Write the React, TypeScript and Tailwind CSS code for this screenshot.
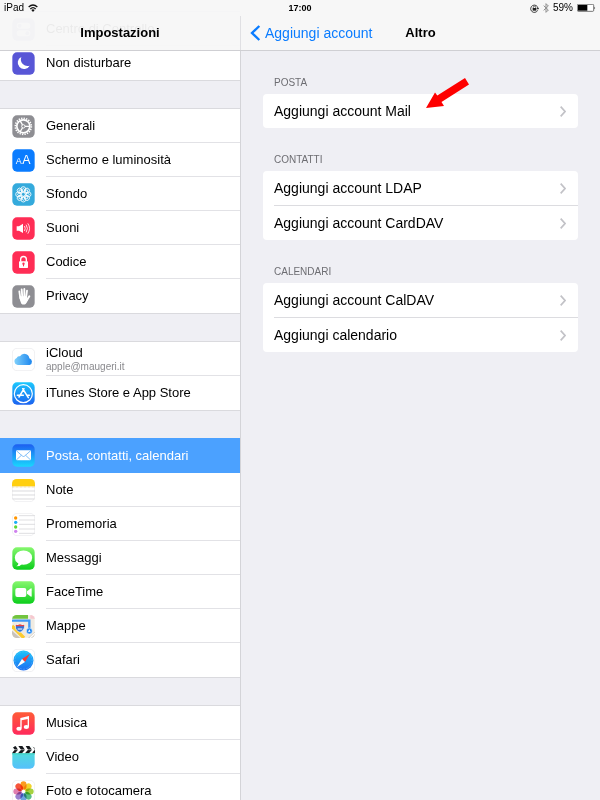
import React from 'react'

interface SettingsItem {
  label: string
  detail?: string
  selected?: boolean
  icon: React.ReactNode
}

interface TileProps {
  fill: string
  outlined?: boolean
  children?: React.ReactNode
}

const Tile: React.FC<TileProps> = ({ fill, outlined, children }) => {
  return (
    <svg viewBox="0 0 69 69" className="size-[23px] shrink-0" aria-hidden="true">
      <rect x="1" y="1" width="67" height="67" rx="14" fill={fill} stroke={outlined ? '#e9e9ec' : 'none'} strokeWidth="2" />
      {children}
    </svg>
  )
}

const Gradients: React.FC = () => {
  const stops = [
    ['g-cloud', '#7fd0fb', '#1c86ee'],
    ['g-store', '#1bc8fd', '#1b62f0'],
    ['g-mail', '#1d5ff0', '#1ad6fd'],
    ['g-green', '#86f76e', '#0cce1c'],
    ['g-safari', '#1bc6fb', '#1c6cf1'],
    ['g-music', '#ff5b37', '#ff2a5c'],
    ['g-video', '#4fe6cf', '#55c0fb'],
  ]
  return (
    <svg width="0" height="0" className="absolute" aria-hidden="true">
      <defs>
        {stops.map(([id, from, to]) =>
          <linearGradient key={id} id={id} x1="0" y1="0" x2={id === 'g-cloud' ? '1' : '0'} y2={id === 'g-cloud' ? '0' : '1'}>
            <stop offset="0" stopColor={from} />
            <stop offset="1" stopColor={to} />
          </linearGradient>
        )}
        <clipPath id="tile-clip">
          <rect x="0" y="0" width="69" height="69" rx="14" />
        </clipPath>
      </defs>
    </svg>
  )
}

const ControlCenterIcon = () => (
  <Tile fill="#a9a9d8">
    <rect x="14" y="14" width="41" height="18" rx="9" fill="#fff" />
    <circle cx="23" cy="23" r="6" fill="#a9a9d8" />
    <rect x="14" y="37" width="41" height="18" rx="9" fill="#fff" />
    <circle cx="46" cy="46" r="6" fill="#a9a9d8" />
  </Tile>
)

const MoonIcon = () => (
  <Tile fill="#5856d6">
    <path d="M28 15A19 19 0 1 0 53 41A20 20 0 0 1 28 15Z" fill="#fff" />
  </Tile>
)

const GearIcon = () => (
  <Tile fill="#8e8e93">
    <g fill="none" stroke="#fff">
      <circle cx="34" cy="34" r="24" strokeWidth="5" strokeDasharray="4 3.54" />
      <circle cx="34" cy="34" r="19.5" strokeWidth="5" />
      <circle cx="34" cy="34" r="5" strokeWidth="3" />
      <path d="M39 34H53M31.500 29.700L24 17M31.500 38.300L24 51" strokeWidth="4" />
    </g>
  </Tile>
)

const DisplayIcon = () => (
  <Tile fill="#0a7cff">
    <g fill="#fff" fontFamily="Liberation Sans, sans-serif">
      <text x="11" y="46" fontSize="27">A</text>
      <text x="31" y="46" fontSize="37">A</text>
    </g>
  </Tile>
)

const WallpaperIcon = () => (
  <Tile fill="#34aadc">
    <g fill="none" stroke="#fff" strokeWidth="2.500">
      {[0, 45, 90, 135, 180, 225, 270, 315].map(angle =>
        <g key={angle} transform={`rotate(${angle} 34 34)`}>
          <circle cx="34" cy="18" r="7" />
          <path d="M34 28C29 24 29 19 34 16C39 19 39 24 34 28" />
        </g>
      )}
      <circle cx="34" cy="34" r="6" />
    </g>
  </Tile>
)

const SoundsIcon = () => (
  <Tile fill="#ff2d55">
    <path d="M14 28H21L33 20V48L21 41H14Z" fill="#fff" />
    <g fill="none" stroke="#fff" strokeWidth="2.500" strokeLinecap="round">
      <path d="M38 28Q42 34 38 41" />
      <path d="M43 24Q50 34 43 45" />
      <path d="M48 20Q58 34 48 49" />
    </g>
  </Tile>
)

const LockIcon = () => (
  <Tile fill="#ff2d55">
    <rect x="21" y="31" width="27" height="20" rx="2" fill="#fff" />
    <path d="M26 32V25a8.500 8.500 0 0 1 17 0V32" fill="none" stroke="#fff" strokeWidth="4" />
    <circle cx="34.500" cy="38" r="3.500" fill="#ff2d55" />
    <path d="M34.500 39V46" stroke="#ff2d55" strokeWidth="3" />
  </Tile>
)

const HandIcon = () => (
  <Tile fill="#8e8e93">
    <g stroke="#fff" strokeLinecap="round" strokeWidth="5.500">
      <path d="M22 19L25 40M29 13L31 38M37 12V38M45 17L42 40" />
      <path d="M52 34L45 45" strokeWidth="6" />
    </g>
    <path d="M22 34H44V42L50 39Q46 52 41 57Q34 61 28 56Q23 48 22 34Z" fill="#fff" />
  </Tile>
)

const CloudIcon = () => (
  <Tile fill="#fff" outlined>
    <path d="M17 51A11 11 0 0 1 14 30A8 8 0 0 1 24 25A15 15 0 0 1 52 31A10.500 10.500 0 0 1 53 51Z" fill="url(#g-cloud)" />
  </Tile>
)

const AppStoreIcon = () => (
  <Tile fill="url(#g-store)">
    <g fill="none" stroke="#fff" strokeLinecap="round">
      <circle cx="34" cy="35" r="27" strokeWidth="3.500" />
      <path d="M36 20L21 45M32 20L49 47M16 40H34M44 40H52" strokeWidth="4.500" />
    </g>
  </Tile>
)

const MailIcon = () => (
  <Tile fill="url(#g-mail)">
    <rect x="12" y="19" width="45" height="30" rx="3" fill="#fff" />
    <path d="M13 20L31 36Q34.500 39 38 36L56 20M13 48L28 34M56 48L41 34" fill="none" stroke="#3f9df5" strokeWidth="2" />
  </Tile>
)

const NotesIcon = () => (
  <Tile fill="#fff" outlined>
    <g clipPath="url(#tile-clip)">
      <rect width="69" height="22" fill="#ffcf10" />
      <path d="M0 24H69" stroke="#d9b75a" strokeWidth="2" strokeDasharray="2 2" />
      <path d="M0 36H69M0 48H69M0 60H69" stroke="#d3d3d6" strokeWidth="2.500" />
    </g>
  </Tile>
)

const RemindersIcon = () => (
  <Tile fill="#fff" outlined>
    <path d="M21 8H69M21 21H69M21 34H69M21 48H69M21 61H69" stroke="#d8d8db" strokeWidth="2.500" />
    <circle cx="11" cy="15" r="5" fill="#ff9500" />
    <circle cx="11" cy="28" r="5" fill="#1badf8" />
    <circle cx="11" cy="42" r="5" fill="#5fd836" />
    <circle cx="11" cy="55" r="5" fill="#cf82ee" />
  </Tile>
)

const MessagesIcon = () => (
  <Tile fill="url(#g-green)">
    <ellipse cx="34.500" cy="32" rx="26" ry="21.500" fill="#fff" />
    <path d="M20 45Q20 54 13 58Q25 58 31 50Z" fill="#fff" />
  </Tile>
)

const FaceTimeIcon = () => (
  <Tile fill="url(#g-green)">
    <rect x="10" y="21" width="33" height="27" rx="6" fill="#fff" />
    <path d="M45 31L57 22Q59 21 59 24V45Q59 48 57 47L45 38Z" fill="#fff" />
  </Tile>
)

const MapsIcon = () => (
  <Tile fill="#f0ebe2">
    <g clipPath="url(#tile-clip)">
      <path d="M0 0H48V11H0Z" fill="#72c43f" />
      <path d="M55 0H69V11H55Z" fill="#f6c8cf" />
      <path d="M0 47L25 69H0Z" fill="#c9c3ba" />
      <path d="M48 69L69 50V69Z" fill="#cfc9c0" />
      <path d="M0 33L36 69" stroke="#fccb2f" strokeWidth="10" />
      <path d="M69 55L54 69" stroke="#fff" strokeWidth="4" />
      <path d="M0 17H52V46" fill="none" stroke="#3d98f7" strokeWidth="7" />
      <path d="M12 29Q18 32 24 28Q30 32 36 29L38 36Q36 48 24 52Q11 48 10 36Z" fill="#3374d8" stroke="#fff" strokeWidth="2" />
      <path d="M12 29Q18 32 24 28Q30 32 36 29L37 34H11Z" fill="#e8413f" />
      <path d="M17 42H31" stroke="#fff" strokeWidth="3" />
      <circle cx="52" cy="48" r="9" fill="#2489f3" stroke="#fff" strokeWidth="1.500" />
      <path d="M52 43L56 52L52 50L48 52Z" fill="#fff" />
    </g>
  </Tile>
)

const SafariIcon = () => (
  <Tile fill="#fff" outlined>
    <circle cx="34.500" cy="34.500" r="30" fill="url(#g-safari)" />
    <circle cx="34.500" cy="34.500" r="26" fill="none" stroke="#6fc0f8" strokeWidth="3" strokeDasharray="1.500 3" />
    <path d="M54 14L30 30L39 39Z" fill="#fb3b33" />
    <path d="M15 54L30 30L39 39Z" fill="#fff" />
  </Tile>
)

const MusicIcon = () => (
  <Tile fill="url(#g-music)">
    <path d="M25 18L51 12V20L29 25V49H25Z" fill="#fff" />
    <path d="M47 14H51V44H47Z" fill="#fff" />
    <ellipse cx="21" cy="50" rx="8" ry="6" fill="#fff" />
    <ellipse cx="43" cy="45" rx="8" ry="6" fill="#fff" />
  </Tile>
)

const VideoIcon = () => (
  <Tile fill="url(#g-video)">
    <g clipPath="url(#tile-clip)">
      <rect width="69" height="22" fill="#fff" />
      <path d="M0 0H11L18 11L9 22H0L8 11ZM19 0H31L39 11L30 22H18L27 11ZM41 0H52L60 11L51 22H39L48 11ZM62 0H69V22H60L68 11Z" fill="#15181c" />
      <path d="M0 11H69" stroke="#fff" strokeWidth="1.500" />
      <rect y="22" width="69" height="3" fill="#3acfbc" />
    </g>
  </Tile>
)

const petals = ['#fb9a1e', '#f2d32c', '#a5d13f', '#58bf88', '#6aa3e0', '#9a80cf', '#e07fb0', '#f6553a']

const PhotosIcon = () => (
  <Tile fill="#fff" outlined>
    {petals.map((color, index) =>
      <rect key={color} x="25.500" y="4" width="18" height="25" rx="9" fill={color} className="mix-blend-multiply" transform={`rotate(${index * 45} 34.500 34.500)`} />
    )}
  </Tile>
)

const groups: SettingsItem[][] = [
  [
    { label: 'Centro di Controllo', icon: <ControlCenterIcon /> },
    { label: 'Non disturbare', icon: <MoonIcon /> },
  ],
  [
    { label: 'Generali', icon: <GearIcon /> },
    { label: 'Schermo e luminosità', icon: <DisplayIcon /> },
    { label: 'Sfondo', icon: <WallpaperIcon /> },
    { label: 'Suoni', icon: <SoundsIcon /> },
    { label: 'Codice', icon: <LockIcon /> },
    { label: 'Privacy', icon: <HandIcon /> },
  ],
  [
    { label: 'iCloud', detail: 'apple@maugeri.it', icon: <CloudIcon /> },
    { label: 'iTunes Store e App Store', icon: <AppStoreIcon /> },
  ],
  [
    { label: 'Posta, contatti, calendari', selected: true, icon: <MailIcon /> },
    { label: 'Note', icon: <NotesIcon /> },
    { label: 'Promemoria', icon: <RemindersIcon /> },
    { label: 'Messaggi', icon: <MessagesIcon /> },
    { label: 'FaceTime', icon: <FaceTimeIcon /> },
    { label: 'Mappe', icon: <MapsIcon /> },
    { label: 'Safari', icon: <SafariIcon /> },
  ],
  [
    { label: 'Musica', icon: <MusicIcon /> },
    { label: 'Video', icon: <VideoIcon /> },
    { label: 'Foto e fotocamera', icon: <PhotosIcon /> },
  ],
]

const sections = [
  { title: 'POSTA', items: ['Aggiungi account Mail'] },
  { title: 'CONTATTI', items: ['Aggiungi account LDAP', 'Aggiungi account CardDAV'] },
  { title: 'CALENDARI', items: ['Aggiungi account CalDAV', 'Aggiungi calendario'] },
]

const StatusBar: React.FC = () => {
  return (
    <div className="grid h-4 grid-cols-3 items-center px-1 text-[10px] leading-4">
      <div className="flex items-center gap-1">
        <span>iPad</span>
        <svg viewBox="0 0 30 24" className="h-2 w-[10px]" aria-hidden="true">
          <g fill="none" stroke="#111" strokeWidth="4">
            <path d="M2 9Q15 -3 28 9" />
            <path d="M7 15Q15 7 23 15" />
          </g>
          <path d="M10 18Q15 14 20 18L15 24Z" fill="#111" />
        </svg>
      </div>
      <time className="text-center text-[9px] font-bold">17:00</time>
      <div className="flex items-center justify-end gap-1">
        <svg viewBox="0 0 27 27" className="size-[9px]" aria-hidden="true">
          <path d="M23 19A11 11 0 1 1 24 13" fill="none" stroke="#222" strokeWidth="2.500" />
          <path d="M20 12H27L24 17Z" fill="#222" />
          <rect x="8" y="12" width="11" height="8" fill="#222" />
          <path d="M10 13V10a3.500 3.500 0 0 1 7 0V13" fill="none" stroke="#222" strokeWidth="2" />
        </svg>
        <svg viewBox="0 0 18 30" className="h-[10px] w-[6px]" aria-hidden="true">
          <path d="M2 8L16 21L9 28V2L16 9L2 22" fill="none" stroke="#8c8c8c" strokeWidth="3" />
        </svg>
        <span>59%</span>
        <svg viewBox="0 0 57 24" className="h-2 w-[19px]" aria-hidden="true">
          <rect x="1" y="1" width="49" height="21" rx="3" fill="#fff" stroke="#333" strokeWidth="2" />
          <rect x="3" y="3" width="28" height="17" fill="#000" />
          <path d="M52 8Q57 12 52 16Z" fill="#333" />
        </svg>
      </div>
    </div>
  )
}

const SettingsRow: React.FC<{ item: SettingsItem, last: boolean }> = ({ item, last }) => {
  return (
    <li>
      {/* the selected row also covers the border above it */}
      <a href="#" className={item.selected ? '-mt-px flex h-[35px] gap-[11px] bg-[#4ba1ff] pl-3 text-white' : 'flex h-[34px] gap-[11px] bg-white pl-3'}>
        <span className="flex items-center">{item.icon}</span>
        <span className={last || item.selected ? 'flex flex-1 flex-col justify-center' : 'flex flex-1 flex-col justify-center border-b border-[#e2e2e6]'}>
          <span className="leading-4">{item.label}</span>
          {item.detail && <span className="text-[10px] leading-3 text-[#8a8a8e]">{item.detail}</span>}
        </span>
      </a>
    </li>
  )
}

const ArrowMark: React.FC = () => {
  return (
    <svg viewBox="0 0 44 32" className="absolute -top-[17px] left-[162px] h-8 w-11" aria-hidden="true">
      <path d="M1 31L10 15.500L12.300 18.500L40 1L44 7.500L16.500 25L19 29Z" fill="#fe0000" />
    </svg>
  )
}

const App: React.FC = () => {
  return (
    <div className="flex h-screen flex-col overflow-hidden bg-[#efeff4] font-['Liberation_Sans',Arial,sans-serif] text-[13px] text-black">
      <Gradients />
      <header className="relative z-10 border-b border-[#cfcfd3] bg-[#f7f7f7]/95">
        <StatusBar />
        <div className="grid grid-cols-[2fr_3fr]">
          <h1 className="flex h-[34px] items-center justify-center font-bold">Impostazioni</h1>
          <div className="grid h-[34px] grid-cols-[1fr_auto_1fr] items-center border-l border-[#e0e0e3] px-[9px]">
            <button type="button" className="flex items-center gap-1 text-[14px] text-[#0a7cff]">
              <svg viewBox="0 0 33 48" className="h-4 w-[11px]" aria-hidden="true">
                <path d="M28 3L6 24L28 45" fill="none" stroke="#0a7cff" strokeWidth="7" />
              </svg>
              Aggiungi account
            </button>
            <h2 className="font-bold">Altro</h2>
          </div>
        </div>
      </header>
      <div className="grid min-h-0 flex-1 grid-cols-[2fr_3fr]">
        <nav className="-mt-10 flex flex-col gap-[27px]" aria-label="Impostazioni">
          {groups.map((group, index) =>
            <ul key={index} className="border-y border-[#dadade]">
              {group.map((item, i) => <SettingsRow key={item.label} item={item} last={i === group.length - 1} />)}
            </ul>
          )}
        </nav>
        <main className="border-l border-[#d4d4d8] px-[22px] text-[14px]">
          {sections.map(section =>
            <section key={section.title}>
              <h3 className="flex h-[43px] items-end px-[11px] pb-[3px] text-[10px] leading-4 text-[#6d6d72]">{section.title}</h3>
              <ul className="rounded-[4px] bg-white">
                {section.items.map((label, i) =>
                  <li key={label} className="relative">
                    <a href="#" className="flex pl-[11px]">
                      <span className={i > 0 ? 'flex h-[35px] flex-1 items-center justify-between border-t border-[#dcdce0] pr-3' : 'flex h-[34px] flex-1 items-center justify-between pr-3'}>
                        {label}
                        <svg viewBox="0 0 18 33" className="h-[11px] w-[6px]" aria-hidden="true">
                          <path d="M2 2L15 16.500L2 31" fill="none" stroke="#c2c2c7" strokeWidth="5" />
                        </svg>
                      </span>
                    </a>
                    {label === 'Aggiungi account Mail' && <ArrowMark />}
                  </li>
                )}
              </ul>
            </section>
          )}
        </main>
      </div>
    </div>
  )
}

export default App
